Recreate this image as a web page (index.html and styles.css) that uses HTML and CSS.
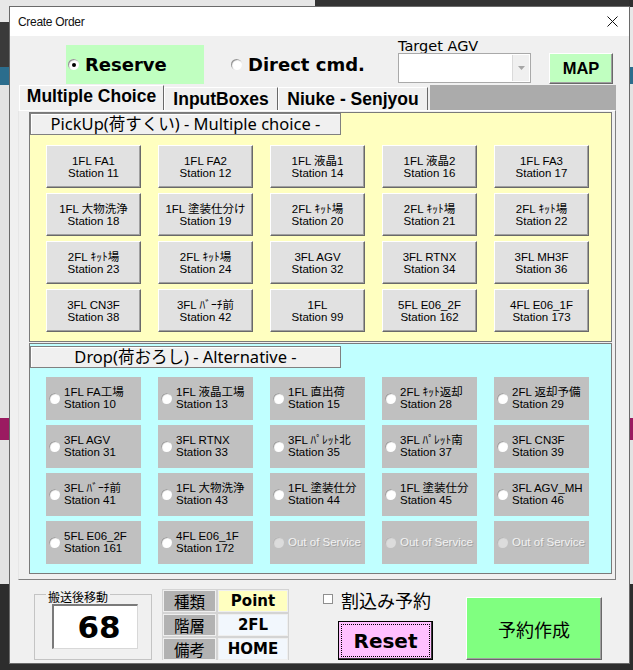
FILE: index.html
```html
<!DOCTYPE html>
<html lang="ja">
<head>
<meta charset="utf-8">
<title>Create Order</title>
<link rel="stylesheet" href="styles.css">
</head>
<body>
<div class="window">
  <div class="titlebar">
    <span class="title">Create Order</span>
    <svg class="close" width="11" height="11" viewBox="0 0 11 11"><path d="M0.5 0.5 L10.5 10.5 M10.5 0.5 L0.5 10.5" stroke="#111" stroke-width="1"/></svg>
  </div>
  <div class="client">
    <div class="toprow">
      <div class="opt opt-reserve"><span class="radio on"></span><span>Reserve</span></div>
      <div class="opt opt-direct"><span class="radio"></span><span>Direct cmd.</span></div>
      <div class="agv">
        <div class="agv-label">Target AGV</div>
        <div class="combo"><span class="combo-btn"><svg width="7" height="4" viewBox="0 0 7 4"><path d="M0 0 H7 L3.5 4 Z" fill="#a6a6a6"/></svg></span></div>
      </div>
      <div class="map">MAP</div>
    </div>

    <div class="multipage">
      <div class="tabs">
        <div class="tab tab-active">Multiple Choice</div>
        <div class="tab tab-2">InputBoxes</div>
        <div class="tab tab-3">Niuke - Senjyou</div>
        <div class="tab-fill"></div>
      </div>
      <div class="page">
        <div class="frame pickup">
          <div class="frame-head">PickUp(荷すくい) - Multiple choice -</div>
          <div class="grid">
            <div class="btn"><span>1FL FA1</span><span>Station 11</span></div>
            <div class="btn"><span>1FL FA2</span><span>Station 12</span></div>
            <div class="btn"><span>1FL 液晶1</span><span>Station 14</span></div>
            <div class="btn"><span>1FL 液晶2</span><span>Station 16</span></div>
            <div class="btn"><span>1FL FA3</span><span>Station 17</span></div>
            <div class="btn"><span>1FL 大物洗浄</span><span>Station 18</span></div>
            <div class="btn"><span>1FL 塗装仕分け</span><span>Station 19</span></div>
            <div class="btn"><span>2FL ｷｯﾄ場</span><span>Station 20</span></div>
            <div class="btn"><span>2FL ｷｯﾄ場</span><span>Station 21</span></div>
            <div class="btn"><span>2FL ｷｯﾄ場</span><span>Station 22</span></div>
            <div class="btn"><span>2FL ｷｯﾄ場</span><span>Station 23</span></div>
            <div class="btn"><span>2FL ｷｯﾄ場</span><span>Station 24</span></div>
            <div class="btn"><span>3FL AGV</span><span>Station 32</span></div>
            <div class="btn"><span>3FL RTNX</span><span>Station 34</span></div>
            <div class="btn"><span>3FL MH3F</span><span>Station 36</span></div>
            <div class="btn"><span>3FL CN3F</span><span>Station 38</span></div>
            <div class="btn"><span>3FL ﾊﾞｰﾁ前</span><span>Station 42</span></div>
            <div class="btn"><span>1FL</span><span>Station 99</span></div>
            <div class="btn"><span>5FL E06_2F</span><span>Station 162</span></div>
            <div class="btn"><span>4FL E06_1F</span><span>Station 173</span></div>
          </div>
        </div>
        <div class="frame drop">
          <div class="frame-head">Drop(荷おろし) - Alternative -</div>
          <div class="grid">
            <div class="pt"><span class="radio"></span><span class="pt-text"><span>1FL FA工場</span><span>Station 10</span></span></div>
            <div class="pt"><span class="radio"></span><span class="pt-text"><span>1FL 液晶工場</span><span>Station 13</span></span></div>
            <div class="pt"><span class="radio"></span><span class="pt-text"><span>1FL 直出荷</span><span>Station 15</span></span></div>
            <div class="pt"><span class="radio"></span><span class="pt-text"><span>2FL ｷｯﾄ返却</span><span>Station 28</span></span></div>
            <div class="pt"><span class="radio"></span><span class="pt-text"><span>2FL 返却予備</span><span>Station 29</span></span></div>
            <div class="pt"><span class="radio"></span><span class="pt-text"><span>3FL AGV</span><span>Station 31</span></span></div>
            <div class="pt"><span class="radio"></span><span class="pt-text"><span>3FL RTNX</span><span>Station 33</span></span></div>
            <div class="pt"><span class="radio"></span><span class="pt-text"><span>3FL ﾊﾟﾚｯﾄ北</span><span>Station 35</span></span></div>
            <div class="pt"><span class="radio"></span><span class="pt-text"><span>3FL ﾊﾟﾚｯﾄ南</span><span>Station 37</span></span></div>
            <div class="pt"><span class="radio"></span><span class="pt-text"><span>3FL CN3F</span><span>Station 39</span></span></div>
            <div class="pt"><span class="radio"></span><span class="pt-text"><span>3FL ﾊﾞｰﾁ前</span><span>Station 41</span></span></div>
            <div class="pt"><span class="radio"></span><span class="pt-text"><span>1FL 大物洗浄</span><span>Station 43</span></span></div>
            <div class="pt"><span class="radio"></span><span class="pt-text"><span>1FL 塗装仕分</span><span>Station 44</span></span></div>
            <div class="pt"><span class="radio"></span><span class="pt-text"><span>1FL 塗装仕分</span><span>Station 45</span></span></div>
            <div class="pt"><span class="radio"></span><span class="pt-text"><span>3FL AGV_MH</span><span>Station 46</span></span></div>
            <div class="pt"><span class="radio"></span><span class="pt-text"><span>5FL E06_2F</span><span>Station 161</span></span></div>
            <div class="pt"><span class="radio"></span><span class="pt-text"><span>4FL E06_1F</span><span>Station 172</span></span></div>
            <div class="pt pt-off"><span class="radio"></span><span class="pt-text">Out of Service</span></div>
            <div class="pt pt-off"><span class="radio"></span><span class="pt-text">Out of Service</span></div>
            <div class="pt pt-off"><span class="radio"></span><span class="pt-text">Out of Service</span></div>
          </div>
        </div>
      </div>
    </div>

    <div class="bottom">
      <div class="group">
        <div class="group-label">搬送後移動</div>
        <div class="val-box">68</div>
      </div>
      <div class="info">
        <div class="info-k">種類</div><div class="info-v info-yellow">Point</div>
        <div class="info-k">階層</div><div class="info-v">2FL</div>
        <div class="info-k">備考</div><div class="info-v">HOME</div>
      </div>
      <div class="actions">
        <div class="chk-row"><span class="chk"></span><span>割込み予約</span></div>
        <div class="reset">Reset</div>
      </div>
      <div class="create">予約作成</div>
    </div>
  </div>
</div>
</body>
</html>
```

FILE: styles.css
```css
* { box-sizing: border-box; }

html, body { margin: 0; padding: 0; }

body {
  width: 633px;
  height: 670px;
  overflow: hidden;
  background:
    linear-gradient(#e8e8e8 0 22px, #3a3a3a 22px 67px, #2b6d8d 67px 85px, #e3e3e3 85px 418px, #9b1b61 418px 440px, #e3e3e3 440px 584px, #2d2d2d 584px) 0 0 / 10px 100% no-repeat,
    linear-gradient(#2f2f2f 0 7px, #e8e8e8 7px 67px, #2b6d8d 67px 84px, #e3e3e3 84px 418px, #9b1b61 418px 440px, #e3e3e3 440px 584px, #2d2d2d 584px) 629px 0 / 4px 100% no-repeat,
    linear-gradient(to right, #e6e6e6 0 315px, #333 315px) 0 0 / 100% 7px no-repeat,
    #2d2d2d;
  font-family: "Liberation Sans", "Noto Sans CJK JP", sans-serif;
  color: #000;
}

.window {
  margin: 7px 0 0 10px;
  width: 619px;
  height: 656px;
  background: #f0f0f0;
  box-shadow: 0 0 0 1px #6a6a6a;
  display: flex;
  flex-direction: column;
}

.titlebar {
  height: 29px;
  background: #fff;
  display: flex;
  align-items: center;
  justify-content: space-between;
  padding: 0 11px 0 8px;
  font-family: "Liberation Sans", sans-serif;
  font-size: 12px;
  letter-spacing: -0.3px;
  color: #111;
}

.close { display: block; }

.client { flex: 1; display: flex; flex-direction: column; }

/* top row */
.toprow {
  height: 49px;
  display: flex;
  align-items: flex-start;
  padding-left: 56px;
}

.opt {
  height: 39px;
  margin-top: 9px;
  display: flex;
  align-items: center;
  gap: 6px;
  font-family: "DejaVu Sans", sans-serif;
  font-weight: bold;
  font-size: 18px;
  white-space: nowrap;
}

.opt-reserve { width: 138px; background: #c0ffc0; padding-left: 2px; }
.opt-direct { width: 167px; margin-left: 27px; }

.radio {
  flex: none;
  width: 11px;
  height: 11px;
  border-radius: 50%;
  background: #fff;
  box-shadow: inset 1px 1px 1px #8c8c8c;
  display: flex;
  align-items: center;
  justify-content: center;
}

.radio.on::after {
  content: "";
  width: 4px;
  height: 4px;
  border-radius: 50%;
  background: #000;
}

.agv { width: 133px; display: flex; flex-direction: column; }

.agv-label {
  margin-top: 3px;
  height: 14px;
  line-height: 14px;
  font-family: "DejaVu Sans", sans-serif;
  font-size: 14.5px;
  white-space: nowrap;
}

.combo {
  height: 30px;
  background: #fff;
  border: 1px solid #a9a9a9;
  display: flex;
  justify-content: flex-end;
  padding: 1px;
}

.combo-btn {
  width: 17px;
  background: #f0f0f0;
  border-left: 1px solid #dadada;
  display: flex;
  align-items: center;
  justify-content: center;
}

.map {
  margin: 17px 0 0 18px;
  width: 64px;
  height: 31px;
  background: #c0ffc0;
  border: 1px solid;
  border-color: #fff #696969 #696969 #fff;
  box-shadow: inset -1px -1px 0 #a0a0a0;
  display: flex;
  align-items: center;
  justify-content: center;
  font-family: "Liberation Sans", sans-serif;
  font-weight: bold;
  font-size: 16.5px;
}

/* multipage */
.multipage { margin-left: 8px; width: 598px; }

.tabs {
  height: 25px;
  display: flex;
  align-items: flex-end;
  padding-left: 1px;
}

.tab {
  background: #f0f0f0;
  border-top: 1px solid #fff;
  border-left: 1px solid #fff;
  border-right: 1px solid #696969;
  display: flex;
  align-items: center;
  justify-content: center;
  font-family: "Liberation Sans", sans-serif;
  font-weight: bold;
  font-size: 17.5px;
  white-space: nowrap;
}

.tab-active { width: 145px; height: 25px; padding-bottom: 4px; }
.tab-2 { width: 114px; height: 23px; }
.tab-3 { width: 150px; height: 23px; }

.tab-fill { flex: 1; height: 25px; margin-left: 2px; background: #ababab; }

.page {
  height: 470px;
  background: #f0f0f0;
  border: 1px solid;
  border-color: #fff #808080 #808080 #e6e6e6;
  padding: 1px 0 0 10px;
}

.frame {
  width: 583px;
  border: 1px solid #7a7a7a;
}

.pickup { height: 230px; background: #ffffc0; }
.drop { height: 231px; margin-top: 1px; background: #c0ffff; }

.frame-head {
  width: 311px;
  height: 22px;
  background: #f0f0f0;
  border: 1px solid #808080;
  box-shadow: inset 1px 1px 0 #fff;
  text-align: center;
  font-family: "Noto Sans", "Noto Sans CJK JP", sans-serif;
  font-size: 16.5px;
  line-height: 19px;
  white-space: nowrap;
}

.drop .frame-head { margin-top: 2px; }

.grid {
  display: grid;
  grid-template-columns: repeat(5, 95px);
  grid-auto-rows: 43px;
  column-gap: 17px;
  row-gap: 5px;
  margin: 10px 0 0 16px;
}

.drop .grid { margin-top: 9px; }

.btn {
  background: #e1e1e1;
  border: 1px solid;
  border-color: #fff #696969 #696969 #fff;
  box-shadow: inset -1px -1px 0 #a0a0a0;
  display: flex;
  flex-direction: column;
  align-items: center;
  justify-content: center;
  font-size: 11.5px;
  line-height: 12px;
  white-space: nowrap;
}

.pt {
  background: #c0c0c0;
  display: flex;
  align-items: center;
  padding-left: 3px;
  gap: 4px;
  font-size: 11.5px;
  line-height: 11.5px;
  white-space: nowrap;
}

.pt .radio { box-shadow: inset 1px 1px 1px #9a9a9a; }

.pt-text { display: flex; flex-direction: column; }

.pt-off .radio { background: #dcdcdc; box-shadow: inset 1px 1px 1px #b4b4b4; }
.pt-off .pt-text { color: #f2f2f2; text-shadow: 1px 1px 0 #a4a4a4; }

/* bottom */
.bottom {
  flex: 1;
  display: flex;
  align-items: flex-start;
  padding-left: 24px;
}

.group {
  margin-top: 14px;
  width: 118px;
  height: 66px;
  border: 1px solid #c4c4c4;
}

.group-label {
  margin: -5px 0 0 11px;
  width: fit-content;
  padding: 0 2px;
  background: #f0f0f0;
  font-family: "Noto Sans CJK JP", sans-serif;
  font-size: 12px;
  line-height: 14px;
}

.val-box {
  margin: 0 0 0 17px;
  width: 86px;
  height: 45px;
  background: #fff;
  border-style: solid;
  border-width: 2px 1px 1px 2px;
  border-color: #7a7a7a #d8d8d8 #d8d8d8 #7a7a7a;
  display: flex;
  align-items: center;
  justify-content: center;
  padding-left: 7px;
  font-family: "DejaVu Sans", sans-serif;
  font-weight: bold;
  font-size: 31px;
}

.info {
  margin: 9px 0 0 10px;
  width: 127px;
  display: grid;
  grid-template-columns: 53px 70px;
  grid-auto-rows: 22px;
  gap: 2px;
  padding: 1px 1px 0;
  background: #d4d4d4;
}

.info-k, .info-v {
  display: flex;
  align-items: center;
  justify-content: center;
  box-shadow: inset 0 0 0 1px #efefef;
}

.info-k {
  background: #b2b2b2;
  font-family: "Noto Sans CJK JP", sans-serif;
  font-size: 15.5px;
}

.info-v {
  background: #f2f7fd;
  font-family: "DejaVu Sans", sans-serif;
  font-weight: bold;
  font-size: 15px;
}

.info-yellow { background: #ffffc0; }

.actions { margin-left: 34px; width: 110px; }

.chk-row {
  margin-top: 10px;
  height: 20px;
  display: flex;
  align-items: center;
  gap: 8px;
  font-family: "Noto Sans CJK JP", sans-serif;
  font-size: 18px;
  line-height: 20px;
  white-space: nowrap;
}

.chk {
  flex: none;
  width: 10px;
  height: 10px;
  margin-top: -3px;
  background: #fff;
  border: 1px solid #8f8f8f;
}

.reset {
  margin: 11px 0 0 15px;
  width: 95px;
  height: 39px;
  background: #ffc0ff;
  border: 1px solid #000;
  box-shadow: inset -1px -1px 0 #3c3c3c;
  outline: 1px dotted #000;
  outline-offset: -4px;
  display: flex;
  align-items: center;
  justify-content: center;
  font-family: "DejaVu Sans", sans-serif;
  font-weight: bold;
  font-size: 20px;
}

.create {
  margin: 17px 0 0 33px;
  width: 136px;
  height: 63px;
  background: #80ff80;
  border: 1px solid;
  border-color: #fff #696969 #696969 #fff;
  box-shadow: inset -1px -1px 0 #a0a0a0;
  display: flex;
  align-items: center;
  justify-content: center;
  font-family: "Noto Sans CJK JP", sans-serif;
  font-size: 18px;
}
```
